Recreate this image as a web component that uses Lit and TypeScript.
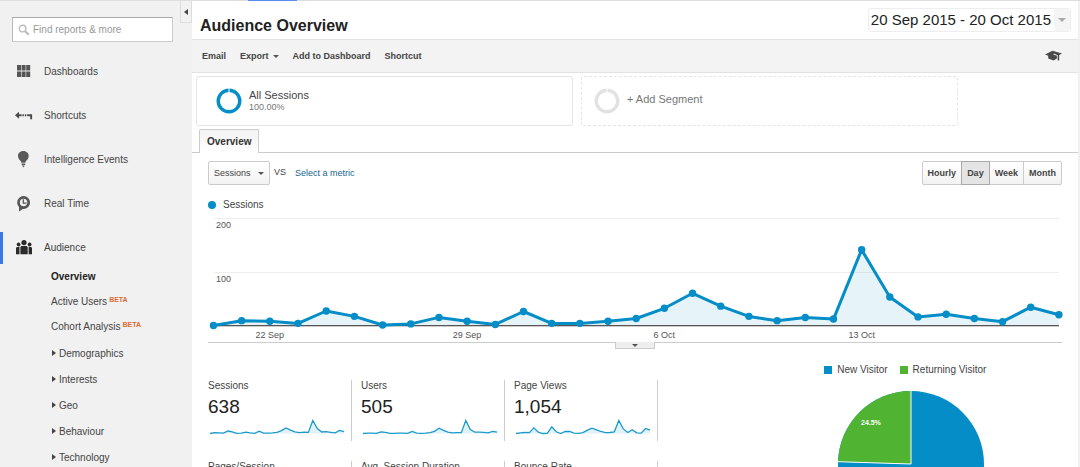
import { LitElement, html, svg, css } from "lit";
import { customElement, property, state } from "lit/decorators.js";
import { classMap } from "lit/directives/class-map.js";

const SESSIONS = [0, 9, 8, 4, 27, 17, 1, 3, 15, 8, 2, 26, 4, 4, 8, 13, 32, 60, 36, 17, 9, 15, 12, 141, 53, 16, 21, 13, 7, 34, 20];
const USERS = [0, 4, 4, 2, 17, 12, 1, 2, 4, 3, 1, 22, 3, 2, 4, 9, 24, 58, 34, 15, 7, 10, 9, 141, 44, 14, 15, 12, 7, 24, 14];
const VIEWS = [0, 8, 11, 10, 61, 15, 0, 2, 72, 18, 0, 22, 22, 4, 2, 10, 36, 58, 40, 22, 9, 11, 18, 141, 50, 11, 40, 7, 4, 54, 36];

const base = css`
  *, *::before, *::after { box-sizing: border-box; }
  :host { font-family: "Liberation Sans", Arial, sans-serif; color: #444; }
  button, input, select { font: inherit; color: inherit; margin: 0; }
  button { cursor: pointer; }
  ul { list-style: none; margin: 0; padding: 0; }
  a { color: inherit; text-decoration: none; }
  svg { display: block; flex: none; }
`;

const icons: Record<string, unknown> = {
  dashboards: svg`<g fill="#555"><path d="M2 3h4v5.500H2zM6.600 3h4v5.500h-4zM11.200 3h4v5.500h-4zM2 9.500h4V15H2zM6.600 9.500h4V15h-4zM11.200 9.500h4V15h-4z"/></g>`,
  shortcuts: svg`<g fill="#4a4a4a"><path d="M0 9.300 4 5.800v2.500h2.600v2H4v2.500z"/><path d="M7.400 8.300h1.500v2H7.400zM9.800 8.300h1.500v2H9.800zM12.200 8.300h4.900v4.900h-1.900v-2.900h-3z"/></g>`,
  events: svg`<g fill="#5a5a5a"><path d="M8.300 1C4.900 1 3 3.400 3 6c0 2 .9 3.100 2 4.300.8.900 1.200 1.600 1.400 2.400h3.900c.2-.8.600-1.500 1.400-2.400 1-1.200 2-2.300 2-4.300 0-2.600-2-5-5.400-5z"/><path d="M6.600 13.500h3.600v1.400H6.600zM7 15.500h2.800L8.400 17.500z"/></g>`,
  realtime: svg`<path d="M8.600 3.400a5.100 5.100 0 1 1 0 10.200 5.100 5.100 0 0 1 0-10.200z" fill="#f1f1f1" stroke="#555" stroke-width="2.700"/><path d="M4 11.500v6l4.500-3z" fill="#555"/><path d="M8.300 5.200v4H11.500" fill="none" stroke="#555" stroke-width="1.300"/>`,
  audience: svg`<g fill="#2b2b2b"><circle cx="9" cy="4.600" r="2.600"/><circle cx="3.600" cy="6.500" r="1.900"/><circle cx="14.600" cy="6.500" r="1.900"/><path d="M5.400 16.300V9.600c0-1 .6-1.600 1.600-1.600h4c1 0 1.700.6 1.700 1.600v6.700z"/><path d="M1 16.300v-5.700c0-1 .5-1.600 1.400-1.600h2.100v7.300zM13.600 16.300V9h2c.9 0 1.400.6 1.400 1.600v5.700z"/></g>`,
};

@customElement("side-nav")
class SideNav extends LitElement {
  static styles = [base, css`
    :host { display: block; background: #f1f1f1; font-size: 10px; overflow: hidden; }
    .top { display: flex; gap: 7px; padding-left: 12px; }
    .search { flex: 1; min-width: 0; height: 25px; margin-top: 16px; display: flex; align-items: center; gap: 3px; padding-left: 5px; background: #fff; border: 1px solid #ccc; border-top-color: #aaa; border-left-color: #bbb; }
    .field { flex: 1; min-width: 0; border: 0; outline: 0; padding: 0; background: none; }
    .field::placeholder { color: #999; opacity: 1; }
    .collapse { width: 12px; height: 22px; padding: 0; display: grid; place-items: center; background: #f1f1f1; border: 1px solid #ddd; border-top: 0; }
    .menu { margin-top: 14px; display: grid; gap: 12px; }
    .item { height: 32px; display: flex; align-items: center; gap: 11px; padding: 0 0 2px 12px; border-left: 3px solid transparent; }
    .item.active { border-left-color: #3b78e7; }
    .leaf { display: flex; align-items: center; gap: 2px; height: 25px; padding-left: 51px; }
    .leaf.current { font-weight: bold; color: #222; }
    .beta { color: #dd6b35; font-size: 7px; font-weight: bold; line-height: 8px; padding-bottom: 3px; }
    .tree { margin-top: 1px; }
    .branch { display: flex; align-items: center; gap: 3px; height: 26px; padding-left: 52px; }
  `];

  render() {
    const items: [string, string][] = [["dashboards", "Dashboards"], ["shortcuts", "Shortcuts"], ["events", "Intelligence Events"], ["realtime", "Real Time"], ["audience", "Audience"]];
    return html`
      <div class="top">
        <label class="search">
          <svg width="12" height="12" viewBox="0 0 12 12" fill="none" stroke="#bbb" aria-hidden="true"><circle cx="4.600" cy="4.600" r="3.300" stroke-width="1.400"/><path d="m7.200 7.200 3.600 3.600" stroke-width="2"/></svg>
          <input class="field" type="search" placeholder="Find reports &amp; more" aria-label="Find reports &amp; more">
        </label>
        <button class="collapse" aria-label="Collapse navigation"><svg width="4" height="6" viewBox="0 0 4 6"><path d="M4 0v6L0 3z" fill="#444"/></svg></button>
      </div>
      <nav>
        <ul class="menu">
          ${items.map(([id, label]) => html`<li><a href="#${id}" class=${classMap({ item: true, active: id === "audience" })}><svg width="18" height="18" viewBox="0 0 18 18" aria-hidden="true">${icons[id]}</svg>${label}</a></li>`)}
        </ul>
        <ul>
          <li><a class="leaf current" href="#overview">Overview</a></li>
          <li><a class="leaf" href="#active">Active Users<span class="beta">BETA</span></a></li>
          <li><a class="leaf" href="#cohort">Cohort Analysis<span class="beta">BETA</span></a></li>
        </ul>
        <ul class="tree">
          ${["Demographics", "Interests", "Geo", "Behaviour", "Technology"].map((t) => html`<li><a class="branch" href="#${t}"><svg width="4" height="6" viewBox="0 0 4 6" aria-hidden="true"><path d="M0 0v6l4-3z" fill="#444"/></svg>${t}</a></li>`)}
        </ul>
      </nav>`;
  }
}

@customElement("trend-chart")
class TrendChart extends LitElement {
  static styles = [base, css`
    :host { display: block; }
    .plot { width: 100%; height: auto; overflow: visible; }
    .label { font-size: 9px; fill: #555; }
    .mid { text-anchor: middle; }
  `];

  render() {
    const x = (i: number) => 5.5 + i * 28.18;
    const y = (v: number) => 108.5 - v * 0.537;
    const line = SESSIONS.map((v, i) => `${x(i).toFixed(1)},${y(v).toFixed(1)}`).join(" ");
    const ticks: [number, string][] = [[2, "22 Sep"], [9, "29 Sep"], [16, "6 Oct"], [23, "13 Oct"]];
    return html`<svg class="plot" viewBox="0 0 854 125" role="img" aria-label="Sessions per day">
      <path d="M6 1.500h845M6 55.500h845" stroke="#eee"/>
      <text class="label" x="8" y="11">200</text>
      <text class="label" x="8" y="65">100</text>
      <polygon points="5.500,108.500 ${line} 851,108.500" fill="#058dc7" fill-opacity=".1"/>
      <path d="M6 108.500h845" stroke="#555"/>
      <path d="M6 109.500h845" stroke="#ccc"/>
      <polyline points=${line} fill="none" stroke="#058dc7" stroke-width="3" stroke-linejoin="round"/>
      ${SESSIONS.map((v, i) => svg`<circle cx=${x(i)} cy=${y(v)} r="3.700" fill="#058dc7"/>`)}
      ${ticks.map(([i, t]) => svg`<text class="label mid" x=${x(i)} y="121">${t}</text>`)}
    </svg>`;
  }
}

@customElement("kpi-card")
class KpiCard extends LitElement {
  @property() label = "";
  @property() value = "";
  @property({ attribute: false }) points: number[] = [];

  static styles = [base, css`
    :host { display: block; height: 61px; border-right: 1px solid #ccc; }
    .name { font-size: 10px; line-height: 12px; }
    .value { font-size: 19px; line-height: 22px; margin-top: 4px; color: #222; }
    .spark { margin: 1px 0 0 2px; }
  `];

  render() {
    const pts = this.points.map((v, i) => `${(i * 4.47).toFixed(1)},${(14.5 - v * 0.092).toFixed(1)}`).join(" ");
    return html`
      <div class="name">${this.label}</div>
      <div class="value">${this.value}</div>
      <svg class="spark" width="135" height="16" viewBox="0 0 135 16" aria-hidden="true">
        <polygon points="0,14.500 ${pts} 134,14.500" fill="#058dc7" fill-opacity=".12"/>
        <polyline points=${pts} fill="none" stroke="#1a9acb" stroke-width="1.300"/>
      </svg>`;
  }
}

@customElement("visitor-pie")
class VisitorPie extends LitElement {
  static styles = [base, css`
    :host { display: grid; justify-items: center; align-content: start; gap: 13px; }
    .legend { display: flex; gap: 12px; padding-right: 12px; font-size: 10px; line-height: 14px; }
    .key { display: flex; align-items: center; gap: 5px; }
    .swatch { width: 8px; height: 8px; background: #058dc7; }
    .swatch.returning { background: #50b432; }
    .share { font-size: 7px; font-weight: bold; fill: #fff; }
  `];

  render() {
    const a = 0.755 * 2 * Math.PI;
    const px = 74 + 73 * Math.sin(a);
    const py = 74 - 73 * Math.cos(a);
    return html`
      <ul class="legend">
        <li class="key"><span class="swatch"></span>New Visitor</li>
        <li class="key"><span class="swatch returning"></span>Returning Visitor</li>
      </ul>
      <svg width="148" height="148" viewBox="0 0 148 148" role="img" aria-label="New and returning visitors">
        <circle cx="74" cy="74" r="73" fill="#058dc7"/>
        <path d="M74 74 ${px} ${py}A73 73 0 0 1 74 1z" fill="#50b432"/>
        <path d="M${px} ${py} 74 74V1" fill="none" stroke="#fff"/>
        <text class="share" x="24" y="35">24.5%</text>
      </svg>`;
  }
}

@customElement("app-root")
class AppRoot extends LitElement {
  @state() private range = "Day";

  static styles = [base, css`
    :host { display: flex; flex-direction: column; height: 100vh; overflow: hidden; background: #fff; }
    .strip { flex: none; height: 1px; background: #ddd; padding-left: 248px; }
    .marker { width: 49px; height: 1px; background: #5b8def; }
    .page { flex: 1; min-height: 0; display: grid; grid-template-columns: 192px minmax(0, 1fr); border-right: 2px solid #f1f1f1; }
    .main { min-width: 0; overflow: hidden; }
    .head { height: 38px; display: flex; justify-content: space-between; align-items: center; padding: 0 7px 0 8px; }
    .title { margin: 12px 0 0; font-size: 16px; line-height: 20px; color: #222; }
    .dates { display: flex; padding: 0; height: 24px; align-items: stretch; border: 1px solid #eee; border-radius: 3px; background: #fff; font-size: 15px; line-height: 22px; color: #222; }
    .period { padding: 0 3px 0 2px; }
    .drop { width: 16px; display: grid; place-items: center; background: #f5f5f5; }
    .tools { height: 34px; display: flex; align-items: center; gap: 14px; padding: 0 16px 0 10px; background: #f3f3f3; border: solid #e2e2e2; border-width: 1px 0; font-size: 9px; }
    .tool { display: flex; align-items: center; gap: 4px; border: 0; padding: 0; background: none; font-weight: bold; }
    .help { margin-left: auto; border: 0; padding: 0; background: none; }
    .segments { display: grid; grid-template-columns: 377px 377px; gap: 8px; padding: 3px 4px; }
    .segment { height: 50px; display: flex; align-items: center; gap: 7px; padding: 0 19px; background: #fff; border: 1px solid #e5e5e5; border-radius: 3px; text-align: left; font-size: 11px; line-height: 13px; }
    .segment.add { border-style: dashed; padding: 0 12px; color: #777; }
    .percent { display: block; font-size: 9px; line-height: 11px; color: #777; }
    .addtext { padding-bottom: 4px; }
    .tabs { display: flex; padding-left: 7px; border-bottom: 1px solid #ccc; }
    .tab { height: 24px; margin-bottom: -1px; padding: 0 7px; border: 1px solid #ccc; border-bottom: 0; border-radius: 2px 2px 0 0; background: linear-gradient(#f3f3f3, #fff); font-size: 10px; font-weight: bold; color: #333; }
    .body { padding: 8px 16px 0; }
    .controls { display: flex; align-items: center; font-size: 9px; }
    .picker { display: grid; align-items: center; }
    .metric { grid-area: 1 / 1; appearance: none; width: 62px; height: 24px; padding: 0 5px; border: 1px solid #ccc; border-radius: 2px; background: linear-gradient(#fff, #f3f3f3); }
    .caret { grid-area: 1 / 1; justify-self: end; margin-right: 6px; pointer-events: none; }
    .vs { margin: 0 9px 2px 4px; }
    .link { color: #15668f; }
    .ranges { display: flex; margin-left: auto; }
    .range { height: 24px; padding: 0 5px; border: 1px solid #ccc; margin-left: -1px; background: linear-gradient(#fff, #f3f3f3); font-weight: bold; }
    .range:first-child { border-radius: 2px 0 0 2px; }
    .range:last-child { border-radius: 0 2px 2px 0; }
    .range.on { background: #e4e4e4; border-color: #aaa; z-index: 1; }
    .serie { display: flex; align-items: center; gap: 7px; margin-top: 14px; font-size: 10px; line-height: 12px; }
    .dot { width: 8px; height: 8px; border-radius: 50%; background: #058dc7; }
    .chart { margin-top: 6px; border-bottom: 1px solid #ccc; }
    .fold { display: grid; place-items: center; width: 40px; height: 7px; margin: -1px auto 0; padding: 0; border: 1px solid #ccc; border-top: 0; background: #eee; }
    .lower { display: grid; grid-template-columns: minmax(0, 11fr) minmax(0, 6fr); margin-top: 14px; }
    .kpis { display: grid; grid-template-columns: 144px 144px 144px; gap: 20px 9px; align-content: start; padding-top: 17px; }
  `];

  private ring(color: string) {
    return html`<svg width="26" height="26" viewBox="0 0 26 26" aria-hidden="true"><circle cx="13" cy="13" r="10.800" fill="none" stroke=${color} stroke-width="3.400"/><path d="M13 0v4" stroke="#fff"/></svg>`;
  }

  private arrow(color = "#555", w = 6) {
    return html`<svg width=${w} height=${w / 2} viewBox="0 0 6 3" aria-hidden="true"><path d="M0 0h6L3 3z" fill=${color}/></svg>`;
  }

  render() {
    const kpis: [string, string, number[]][] = [
      ["Sessions", "638", SESSIONS], ["Users", "505", USERS], ["Page Views", "1,054", VIEWS],
      ["Pages/Session", "1.65", VIEWS], ["Avg. Session Duration", "00:01:32", USERS], ["Bounce Rate", "74.29%", SESSIONS],
    ];
    return html`
      <div class="strip"><div class="marker"></div></div>
      <div class="page">
        <side-nav></side-nav>
        <main class="main">
          <header class="head">
            <h1 class="title">Audience Overview</h1>
            <button class="dates"><span class="period">20 Sep 2015 - 20 Oct 2015</span><span class="drop">${this.arrow("#aaa", 8)}</span></button>
          </header>
          <div class="tools">
            <button class="tool">Email</button>
            <button class="tool">Export ${this.arrow()}</button>
            <button class="tool">Add to Dashboard</button>
            <button class="tool">Shortcut</button>
            <button class="help" aria-label="Help">
              <svg width="17" height="12" viewBox="0 0 17 12" fill="#4a4a4a"><path d="M0 4.400 7.500.8 17 3.400 14.200 5v5.600h-1.500V5.200L8.800 3.600 8.300 4.400l3.600 1.400v2.600L8.600 10.600 3.200 8.400V5.800z"/></svg>
            </button>
          </div>
          <div class="segments">
            <button class="segment">${this.ring("#058dc7")}<span>All Sessions<span class="percent">100.00%</span></span></button>
            <button class="segment add">${this.ring("#e2e2e2")}<span class="addtext">+ Add Segment</span></button>
          </div>
          <div class="tabs" role="tablist"><button class="tab" role="tab" aria-selected="true">Overview</button></div>
          <section class="body">
            <div class="controls">
              <label class="picker"><select class="metric" aria-label="Metric"><option>Sessions</option><option>Users</option></select><span class="caret">${this.arrow()}</span></label>
              <span class="vs">VS</span>
              <a class="link" href="#metric">Select a metric</a>
              <div class="ranges">
                ${["Hourly", "Day", "Week", "Month"].map((r) => html`<button class=${classMap({ range: true, on: r === this.range })} @click=${() => (this.range = r)}>${r}</button>`)}
              </div>
            </div>
            <div class="serie"><span class="dot"></span>Sessions</div>
            <trend-chart class="chart"></trend-chart>
            <button class="fold" aria-label="Collapse chart">${this.arrow()}</button>
            <div class="lower">
              <div class="kpis">
                ${kpis.map(([l, v, p]) => html`<kpi-card .label=${l} .value=${v} .points=${p}></kpi-card>`)}
              </div>
              <visitor-pie></visitor-pie>
            </div>
          </section>
        </main>
      </div>`;
  }
}
